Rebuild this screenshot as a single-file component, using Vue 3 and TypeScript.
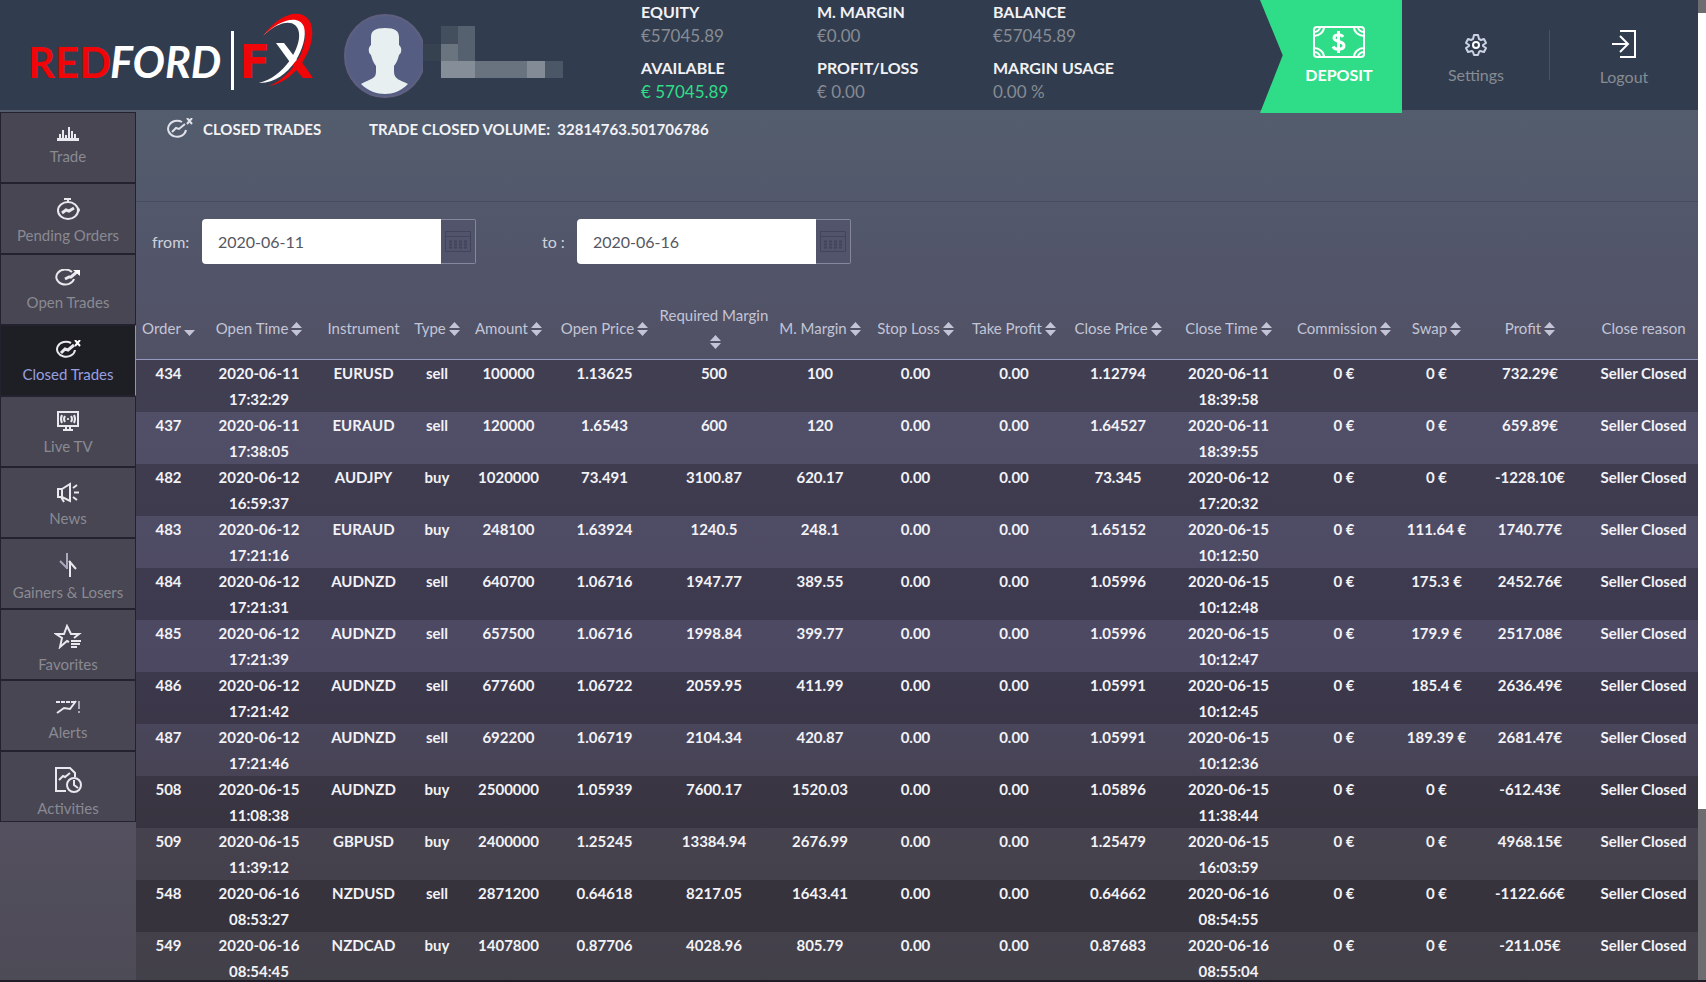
<script setup lang="ts">
import { computed, ref } from 'vue'

interface Stat {
  label: string
  value: string
  accent?: boolean
}

interface NavItem {
  name: string
  icon: string
  width: number
  height: number
}

interface Column {
  title: string
  width: number
  sort: 'none' | 'both' | 'down'
}

const stats: Stat[] = [
  { label: 'EQUITY', value: '€57045.89' },
  { label: 'M. MARGIN', value: '€0.00' },
  { label: 'BALANCE', value: '€57045.89' },
  { label: 'AVAILABLE', value: '€ 57045.89', accent: true },
  { label: 'PROFIT/LOSS', value: '€ 0.00' },
  { label: 'MARGIN USAGE', value: '0.00 %' },
]

const nav: NavItem[] = [
  { name: 'Trade', icon: 'bars', width: 24, height: 14 },
  { name: 'Pending Orders', icon: 'watch', width: 24, height: 22 },
  { name: 'Open Trades', icon: 'open', width: 26, height: 18 },
  { name: 'Closed Trades', icon: 'closed', width: 26, height: 19 },
  { name: 'Live TV', icon: 'tv', width: 22, height: 20 },
  { name: 'News', icon: 'horn', width: 22, height: 21 },
  { name: 'Gainers & Losers', icon: 'arrows', width: 18, height: 24 },
  { name: 'Favorites', icon: 'star', width: 28, height: 25 },
  { name: 'Alerts', icon: 'alert', width: 24, height: 22 },
  { name: 'Activities', icon: 'activity', width: 28, height: 27 },
]
const active = ref('Closed Trades')

const from = ref('2020-06-11')
const to = ref('2020-06-16')

const columns: Column[] = [
  { title: 'Order', width: 65, sort: 'down' },
  { title: 'Open Time', width: 116, sort: 'both' },
  { title: 'Instrument', width: 93, sort: 'none' },
  { title: 'Type', width: 54, sort: 'both' },
  { title: 'Amount', width: 89, sort: 'both' },
  { title: 'Open Price', width: 103, sort: 'both' },
  { title: 'Required Margin', width: 116, sort: 'both' },
  { title: 'M. Margin', width: 96, sort: 'both' },
  { title: 'Stop Loss', width: 95, sort: 'both' },
  { title: 'Take Profit', width: 102, sort: 'both' },
  { title: 'Close Price', width: 106, sort: 'both' },
  { title: 'Close Time', width: 115, sort: 'both' },
  { title: 'Commission', width: 116, sort: 'both' },
  { title: 'Swap', width: 69, sort: 'both' },
  { title: 'Profit', width: 118, sort: 'both' },
  { title: 'Close reason', width: 109, sort: 'none' },
]
const totalWidth = computed(() => columns.reduce((sum, c) => sum + c.width, 0))
const share = (c: Column) => ({ width: `${(c.width / totalWidth.value) * 100}%` })

const trades: string[][] = [
  ['434', '2020-06-11 17:32:29', 'EURUSD', 'sell', '100000', '1.13625', '500', '100', '1.12794', '2020-06-11 18:39:58', '0 €', '732.29€'],
  ['437', '2020-06-11 17:38:05', 'EURAUD', 'sell', '120000', '1.6543', '600', '120', '1.64527', '2020-06-11 18:39:55', '0 €', '659.89€'],
  ['482', '2020-06-12 16:59:37', 'AUDJPY', 'buy', '1020000', '73.491', '3100.87', '620.17', '73.345', '2020-06-12 17:20:32', '0 €', '-1228.10€'],
  ['483', '2020-06-12 17:21:16', 'EURAUD', 'buy', '248100', '1.63924', '1240.5', '248.1', '1.65152', '2020-06-15 10:12:50', '111.64 €', '1740.77€'],
  ['484', '2020-06-12 17:21:31', 'AUDNZD', 'sell', '640700', '1.06716', '1947.77', '389.55', '1.05996', '2020-06-15 10:12:48', '175.3 €', '2452.76€'],
  ['485', '2020-06-12 17:21:39', 'AUDNZD', 'sell', '657500', '1.06716', '1998.84', '399.77', '1.05996', '2020-06-15 10:12:47', '179.9 €', '2517.08€'],
  ['486', '2020-06-12 17:21:42', 'AUDNZD', 'sell', '677600', '1.06722', '2059.95', '411.99', '1.05991', '2020-06-15 10:12:45', '185.4 €', '2636.49€'],
  ['487', '2020-06-12 17:21:46', 'AUDNZD', 'sell', '692200', '1.06719', '2104.34', '420.87', '1.05991', '2020-06-15 10:12:36', '189.39 €', '2681.47€'],
  ['508', '2020-06-15 11:08:38', 'AUDNZD', 'buy', '2500000', '1.05939', '7600.17', '1520.03', '1.05896', '2020-06-15 11:38:44', '0 €', '-612.43€'],
  ['509', '2020-06-15 11:39:12', 'GBPUSD', 'buy', '2400000', '1.25245', '13384.94', '2676.99', '1.25479', '2020-06-15 16:03:59', '0 €', '4968.15€'],
  ['548', '2020-06-16 08:53:27', 'NZDUSD', 'sell', '2871200', '0.64618', '8217.05', '1643.41', '0.64662', '2020-06-16 08:54:55', '0 €', '-1122.66€'],
  ['549', '2020-06-16 08:54:45', 'NZDCAD', 'buy', '1407800', '0.87706', '4028.96', '805.79', '0.87683', '2020-06-16 08:55:04', '0 €', '-211.05€'],
]

const rows = computed(() =>
  trades.map((t) => [...t.slice(0, 8), '0.00', '0.00', t[8], t[9], '0 €', t[10], t[11], 'Seller Closed'])
)
const parts = (cell: string, col: number) => (col === 1 || col === 11 ? cell.split(' ') : [cell])
</script>

<template>
  <div class="screen">
    <div class="app">
      <header class="top">
        <div class="brand">
          <svg class="logo" viewBox="0 0 300 90" role="img" aria-label="Redford FX">
            <text x="0" y="74" class="word red">RED</text>
            <text x="82" y="74" class="word white">FORD</text>
            <rect x="203" y="27" width="3" height="59" fill="#fff" />
            <text x="211" y="74" class="mark">F</text>
            <path d="M248 39h8l13 17-5 5z" fill="#fff" />
            <path d="M264 61l7-7 14 20h-10z" fill="#f00508" />
            <path d="M235 32C251 9 276 2 283 20c7 22-15 58-42 62C266 72 281 42 276 26 271 10 252 16 235 32Z" fill="#f00508" />
            <path d="M235 32C249 17 271 9 276 23c5 18-15 57-45 56 25-6 42-35 40-50C269 14 251 16 235 32Z" fill="#fff" />
          </svg>
          <svg class="avatar" viewBox="0 0 79 84" aria-label="User avatar">
            <ellipse cx="41" cy="42" rx="40" ry="41" fill="#555e82" stroke="#5f6080" stroke-width="2" />
            <path d="M17 70c9-5 15-5 15-12v-6c-3-4-4-7-5-11-3-2-3-8 0-10V23c0-6 4-9 14-9s14 3 14 9v8c3 2 3 8 0 10-1 4-2 7-5 11v6c0 7 6 8 14 12-7 7-15 10-23 10S24 77 17 70Z" fill="#e7eff0" />
          </svg>
          <svg class="name-mask" viewBox="0 0 140 52" aria-hidden="true">
            <path d="M0 18h18v17H0z" fill="#364250" />
            <path d="M18 0h17v18H18z" fill="#444f5e" />
            <path d="M35 0h17v35H35z" fill="#55616e" />
            <path d="M18 18h17v17H18z" fill="#69747f" />
            <path d="M18 35h34v17H18z" fill="#858e98" />
            <path d="M52 35h52v17H52z" fill="#68737f" />
            <path d="M104 35h18v17h-18z" fill="#828b96" />
            <path d="M122 35h18v17h-18z" fill="#4b5767" />
          </svg>
        </div>

        <dl class="stats">
          <div v-for="s in stats" :key="s.label">
            <dt>{{ s.label }}</dt>
            <dd :class="{ accent: s.accent }">{{ s.value }}</dd>
          </div>
        </dl>

        <div class="actions">
          <button type="button" class="deposit">
            <svg width="52" height="32" viewBox="0 0 52 32" fill="none" stroke="#fff" stroke-width="2">
              <rect x="1" y="1" width="50" height="30" rx="3" />
              <path d="M11 1a10 9 0 0 1-10 9M7 1a6 5 0 0 1-6 5M41 1a10 9 0 0 0 10 9M45 1a6 5 0 0 0 6 5M11 31A10 9 0 0 0 1 22M7 31a6 5 0 0 0-6-5M41 31a10 9 0 0 1 10-9M45 31a6 5 0 0 1 6-5" />
              <path d="M30 11c-2-3-9-3-9 1s10 3 10 7.500-9 5-11 1M25.500 5v22" stroke-width="3" />
            </svg>
            <span>DEPOSIT</span>
          </button>
          <button type="button" class="action settings">
            <svg width="22" height="22" viewBox="0 0 22 22" fill="none" stroke="#c9d2e2" stroke-width="2" stroke-linejoin="round">
              <path d="M9 1h4l1 4 2 1 3-1 2 4-3 2v1l3 2-2 4-4-1-1 1-1 3H9l-1-3-1-1-4 1-2-4 3-2v-1L1 9l2-4 3 1 2-1z" />
              <circle cx="11" cy="11" r="3" stroke="#fff" />
            </svg>
            <span>Settings</span>
          </button>
          <button type="button" class="action">
            <svg width="24" height="28" viewBox="0 0 24 28" fill="none" stroke="#fff" stroke-width="2">
              <path d="M8 1h15v26H8M0 14h16M8 6l8 8-8 8" />
            </svg>
            <span>Logout</span>
          </button>
        </div>
      </header>

      <div class="body">
        <nav class="side">
          <button
            v-for="item in nav"
            :key="item.name"
            type="button"
            class="tab"
            :class="{ active: item.name === active }"
            @click="active = item.name"
          >
            <svg :width="item.width" :height="item.height" :viewBox="`0 0 ${item.width} ${item.height}`" fill="none" stroke="#e8e8ee" stroke-width="2">
              <template v-if="item.icon === 'bars'">
                <path d="M1 12.500h22" stroke-width="3" />
                <path d="M4 12V7M7 12V3M10 12V8M13 12V0M16 12V4M19 12V7" />
              </template>
              <template v-else-if="item.icon === 'watch'">
                <path d="M8 1h7M12 1v3" />
                <ellipse cx="12" cy="12.500" rx="10" ry="8.500" />
                <path d="M6 15l4-3 3 1 5-3" stroke-width="3" />
                <path d="M22 10l1 2-1 2" />
              </template>
              <template v-else-if="item.icon === 'open'">
                <path d="M17 3a9 7.500 0 1 0 2 7" />
                <path d="M10 10l4-2 2 0 7-6" stroke-width="3" />
                <path d="M18 1h7v6z" fill="#fff" stroke="none" />
              </template>
              <template v-else-if="item.icon === 'closed'">
                <path d="M16 3a9 7.500 0 1 0 4 7" />
                <path d="M6 13l4-4 3 1 6-5" stroke-width="3" />
                <path d="M20 0l5 6M25 0l-5 6" stroke="#fff" />
              </template>
              <template v-else-if="item.icon === 'tv'">
                <rect x="1" y="1" width="20" height="14" />
                <path d="M6 19h10M9 15v3M13 15v3M8 5q-2 3 0 6M14 5q2 3 0 6M5 4q-2 4 0 8M17 4q2 4 0 8" />
                <circle cx="11" cy="8" r="1" fill="#fff" stroke="none" />
              </template>
              <template v-else-if="item.icon === 'horn'">
                <path d="M1 7h4v8H1zM5 7l8-5v17l-8-4M4 15l3 5M16 6l4-3M17 10.500h5M16 15l4 3" />
              </template>
              <template v-else-if="item.icon === 'arrows'">
                <path d="M8 0v16M1 8l7 7" stroke="#a9a8bd" />
                <path d="M11 24V8M10 8l7 8" />
              </template>
              <template v-else-if="item.icon === 'star'">
                <path d="M15 18l-2-1-7 6 2-9-6-4h8l3-8 4 8h8l-5 4" />
                <path d="M17 17h10M17 20h9M17 23h6" />
              </template>
              <template v-else-if="item.icon === 'alert'">
                <path d="M0 7h20" stroke-dasharray="4 1" />
                <path d="M1 18l7-5 6 1 6-8" />
                <path d="M23 6v8M23 16v2" stroke="#a9a8b5" />
              </template>
              <template v-else>
                <path d="M12 25H2V2h14l5 5v4M5 14l4-4 2 1 5-4" />
                <circle cx="20" cy="19" r="7" />
                <path d="M20 14v5l4 3" />
              </template>
            </svg>
            <span>{{ item.name }}</span>
          </button>
        </nav>

        <main class="main">
          <div class="title">
            <svg width="26" height="21" viewBox="0 0 26 21" fill="none" stroke="#dfe2ea" stroke-width="2">
              <path d="M15 4a9 8 0 1 0 4 8M5 14l4-4 3 1 6-5M20 0l5 6M25 0l-5 6" />
            </svg>
            <h1>CLOSED TRADES</h1>
            <p>TRADE CLOSED VOLUME:&nbsp; 32814763.501706786</p>
          </div>

          <form class="filters" @submit.prevent>
            <div class="field">
              <label for="from">from:</label>
              <input id="from" v-model="from" type="text" />
              <button type="button" aria-label="Choose start date">
                <svg width="26" height="21" viewBox="0 0 26 21" fill="none" stroke="#41445a"><path d="M.5.5h25v20H.5zM0 5.500h26" /><path d="M4 10.500h19M4 13.500h19M4 16.500h19" stroke-width="2" stroke-dasharray="3 2" /></svg>
              </button>
            </div>
            <div class="field second">
              <label for="to">to :</label>
              <input id="to" v-model="to" type="text" />
              <button type="button" aria-label="Choose end date">
                <svg width="26" height="21" viewBox="0 0 26 21" fill="none" stroke="#41445a"><path d="M.5.5h25v20H.5zM0 5.500h26" /><path d="M4 10.500h19M4 13.500h19M4 16.500h19" stroke-width="2" stroke-dasharray="3 2" /></svg>
              </button>
            </div>
          </form>

          <table>
            <colgroup>
              <col v-for="c in columns" :key="c.title" :style="share(c)" />
            </colgroup>
            <thead>
              <tr>
                <th v-for="c in columns" :key="c.title" scope="col">
                  <span>{{ c.title }}</span><wbr /><svg v-if="c.sort !== 'none'" class="sort" width="11" height="14" viewBox="0 0 11 14" fill="#c3c5d6">
                    <path v-if="c.sort === 'both'" d="M0 6l5.500-6L11 6z" />
                    <path d="M0 8h11l-5.500 6z" />
                  </svg>
                </th>
              </tr>
            </thead>
            <tbody>
              <tr v-for="row in rows" :key="row[0]">
                <td v-for="(cell, i) in row" :key="i">
                  <div v-for="part in parts(cell, i)" :key="part">{{ part }}</div>
                </td>
              </tr>
            </tbody>
          </table>
        </main>
      </div>
    </div>
    <div class="scroll" aria-hidden="true"><div class="thumb"></div></div>
  </div>
</template>

<style>
body {
  margin: 0;
  overflow: hidden;
  background: #211d25;
}
</style>

<style scoped>
.screen {
  display: flex;
  box-sizing: border-box;
  height: 100vh;
  overflow: hidden;
  border-bottom: 2px solid #211d28;
  font-family: Lato, sans-serif;
  font-size: 15px;
  color: #f2f2f6;
}
button {
  font: inherit;
  color: inherit;
  border: 0;
  padding: 0;
  background: none;
  cursor: pointer;
}
h1, p, dl, dd {
  margin: 0;
}
.app {
  flex: 1;
  min-width: 0;
  display: flex;
  flex-direction: column;
  background: linear-gradient(#535d6d 110px, #52556a 260px, #515165 360px, #54505f 820px, #4d4b56);
}
.scroll {
  width: 8px;
  padding-top: 13px;
  box-sizing: border-box;
  background: #6d6c70;
}
.thumb {
  height: 82.3%;
  background: #fff;
}

.top {
  flex: none;
  display: flex;
  height: 110px;
  background: #313d4e;
}
.brand {
  flex: 0 0 641px;
  display: flex;
  align-items: flex-start;
}
.logo {
  width: 300px;
  height: 90px;
  margin: 4px 0 0 28px;
}
.word {
  font-size: 43px;
  font-style: italic;
  font-weight: 700;
}
.red {
  font-size: 42px;
  fill: #f00508;
  font-style: normal;
}
.white {
  fill: #fff;
}
.mark {
  font-family: "DejaVu Sans", sans-serif;
  font-size: 46px;
  font-weight: 700;
  fill: #f00508;
}
.avatar {
  width: 79px;
  height: 84px;
  margin: 14px 0 0 16px;
}
.name-mask {
  width: 140px;
  height: 52px;
  margin-top: 26px;
}
.stats {
  flex: 0 0 528px;
  display: grid;
  grid-template-columns: repeat(3, 1fr);
  grid-template-rows: 56px 48px;
}
.stats dt {
  height: 24px;
  line-height: 24px;
  font-size: 16px;
  font-weight: 700;
}
.stats dd {
  height: 24px;
  line-height: 24px;
  font-size: 17px;
  color: #878b93;
}
.stats .accent {
  color: #2fdd88;
}
.actions {
  flex: 1;
  display: flex;
  justify-content: flex-end;
}
.deposit {
  z-index: 1;
  width: 142px;
  height: 113px;
  padding-left: 16px;
  display: flex;
  flex-direction: column;
  align-items: center;
  padding-top: 26px;
  gap: 7px;
  font-size: 16px;
  font-weight: 700;
  line-height: 20px;
  color: #fff;
  background: #2fdd88;
  clip-path: polygon(0 0, 100% 0, 100% 100%, 0 100%, 16% 49%);
}
.action {
  width: 148px;
  padding-top: 30px;
  display: flex;
  flex-direction: column;
  align-items: center;
  gap: 9px;
  font-size: 16px;
  line-height: 20px;
  color: #878b93;
}
.settings {
  padding-top: 34px;
  background: linear-gradient(#47536a, #47536a) right 30px / 1px 50px no-repeat;
}

.body {
  flex: 1;
  min-height: 0;
  display: flex;
}
.side {
  flex: 0 0 136px;
  padding-top: 2px;
}
.tab {
  width: 100%;
  height: 71px;
  box-sizing: border-box;
  padding-top: 14px;
  display: flex;
  flex-direction: column;
  align-items: center;
  gap: 5px;
  line-height: 20px;
  color: #8a8a92;
  border: 1px solid #23222e;
  background: #474652;
}
.tab.active {
  color: #98a0e0;
  background: #1e1e25;
  border-right-color: #8f93c4;
}

.main {
  flex: 1;
  min-width: 0;
  overflow: hidden;
}
.title {
  display: flex;
  align-items: flex-start;
  height: 92px;
  padding: 8px 0 0 31px;
  box-sizing: border-box;
  border-bottom: 1px solid #474c5e;
  line-height: 22px;
}
.title h1,
.title p {
  font-size: 15px;
  font-weight: 700;
}
.title h1 {
  min-width: 125px;
  margin: 0 41px 0 10px;
}
.filters {
  display: flex;
  padding: 17px 0 0 16px;
}
.field {
  display: flex;
  align-items: center;
  height: 45px;
  font-size: 16px;
}
.field label {
  width: 50px;
  color: #cfd1dc;
}
.second label {
  width: 35px;
}
.second {
  margin-left: 66px;
}
.field input {
  width: 239px;
  height: 45px;
  box-sizing: border-box;
  padding: 0 16px;
  border: 0;
  border-radius: 4px 0 0 4px;
  font: inherit;
  color: #555761;
  background: #fff;
}
.field button {
  width: 35px;
  height: 45px;
  display: flex;
  align-items: center;
  justify-content: center;
  border: 1px solid #85879c;
  border-left: 0;
  border-radius: 0 2px 2px 0;
  background: #51546b;
}

table {
  width: 100%;
  margin-top: 32px;
  table-layout: fixed;
  border-collapse: separate;
  border-spacing: 0;
  text-align: center;
}
th {
  height: 63px;
  padding: 0;
  font-weight: 400;
  line-height: 26px;
  color: #c3c5d6;
  border-bottom: 1px solid #9598c0;
}
th span {
  white-space: nowrap;
}
.sort {
  margin-left: 3px;
  vertical-align: -2px;
}
tbody {
  background: linear-gradient(#525068, #4c4862 300px, #45414d 480px, #424049);
}
tbody tr:nth-child(odd) {
  background: rgba(20, 18, 24, 0.28);
}
td {
  height: 52px;
  padding: 0;
  vertical-align: top;
  font-weight: 700;
  line-height: 26px;
}
</style>
